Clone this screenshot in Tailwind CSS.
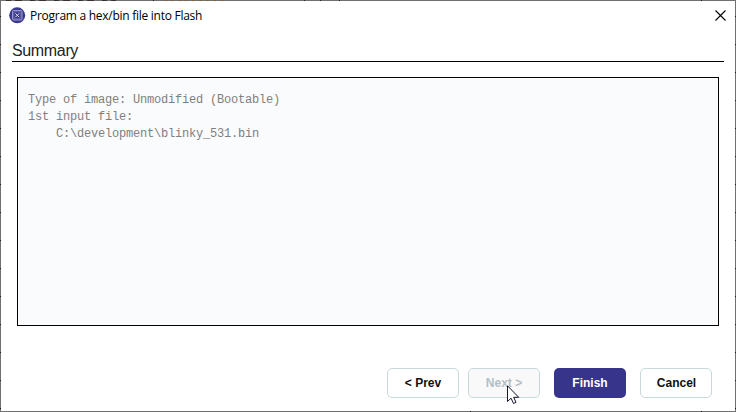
<!DOCTYPE html>
<html lang="en">
<head>
<meta charset="utf-8">
<title>Program a hex/bin file into Flash</title>
<script src="https://cdn.jsdelivr.net/npm/@tailwindcss/browser@4"></script>
</head>
<body class="w-[736px] h-[412px] overflow-hidden bg-[#707070]">
<div class="relative w-[736px] h-[412px] p-px bg-[repeating-linear-gradient(to_bottom,transparent_0px,transparent_16px,#151515_16px,#151515_17px,transparent_17px,transparent_28px)]">
  <svg class="absolute inset-0" width="736" height="412" shape-rendering="crispEdges" fill="#202020">
    <path fill="#707070" d="M1 0h734v1H1zM1 411h734v1H1z"/>
    <path d="M153 0h1v1h-1zM304 0h1v1h-1zM320 0h1v1h-1zM339 0h1v1h-1zM701 0h1v1h-1zM470 411h1v1h-1zM701 411h1v1h-1z"/>
    <path stroke="#3a2f2c" stroke-dasharray="5 4 7 8" d="M6 .5h110"/>
    <path stroke="#81603f" stroke-dasharray="3 4" d="M164 .5h64"/>
  </svg>
  <main class="relative flex flex-col w-[734px] h-[410px] bg-white">
    <header class="flex items-center h-[30px] pl-2 pr-[9px]">
      <svg width="17" height="17" viewBox="0 0 17 17" class="relative -top-px shrink-0" fill="none">
        <circle cx="8.2" cy="8.3" r="8" fill="#3b398f"/>
        <rect x="3.5" y="3.5" width="9.5" height="9.5" rx="1" fill="#5c5aa5" stroke="#9a99cb"/>
        <rect x="5.5" y="5.5" width="5.5" height="5.5" fill="#39378a"/>
        <path d="M6.4 6.4l3.8 3.8M10.2 6.4L6.4 10.2" stroke="#e1e0f2"/>
      </svg>
      <h1 class="ml-[4px] text-[12px] leading-[16px] text-black font-['Open_Sans','Noto_Sans',sans-serif] whitespace-nowrap tracking-[-0.27px]">Program a hex/bin file into Flash</h1>
      <svg class="ml-auto relative -top-px" width="11" height="11" viewBox="0 0 11 11" stroke="#000" stroke-width="1.1"><path d="M.5 .5l10 10M10.5 .5l-10 10"/></svg>
    </header>
    <h2 class="ml-[11px] mr-[11px] h-[31px] pt-[11px] border-b border-black text-[16px] leading-[18px] text-[#222] font-['Liberation_Sans',Arial,sans-serif] tracking-[-0.35px]">Summary</h2>
    <pre class="mt-[15px] ml-4 w-[702px] h-[249px] border border-black bg-[#fafbfd] pt-[14px] pl-[10px] text-[12px] leading-[17px] tracking-[-0.2px] text-[#808080] font-['Courier_New','Liberation_Mono',monospace]">Type of image: Unmodified (Bootable)
1st input file:
    C:\development\blinky_531.bin</pre>
    <footer class="flex mt-[42px] ml-[386px] h-[30px] text-[12px] font-bold font-['Liberation_Sans',Arial,sans-serif] text-[#111]">
      <button class="w-[72px] h-[30px] rounded-[5px] border border-[#c8d9dc] bg-white">&lt; Prev</button>
      <button class="ml-[9px] w-[72px] h-[30px] rounded-[5px] border border-[#c8d9dc] bg-[#f9f9f9] text-[#b4bfc4]">Next &gt;</button>
      <button class="ml-[14px] w-[72px] h-[30px] rounded-[5px] bg-[#37348b] text-white">Finish</button>
      <button class="ml-[14px] w-[72px] h-[30px] rounded-[5px] border border-[#c8d9dc] bg-white pl-px">Cancel</button>
    </footer>
  </main>
  <svg class="absolute left-[507px] top-[385px]" width="13" height="20" viewBox="0 0 13 20"><path d="M.5 .8V16.5L4 13.2l2.5 5.3 2.5-1.1-2.3-5.1h5z" fill="#fff" stroke="#15152a"/></svg>
</div>
</body>
</html>
